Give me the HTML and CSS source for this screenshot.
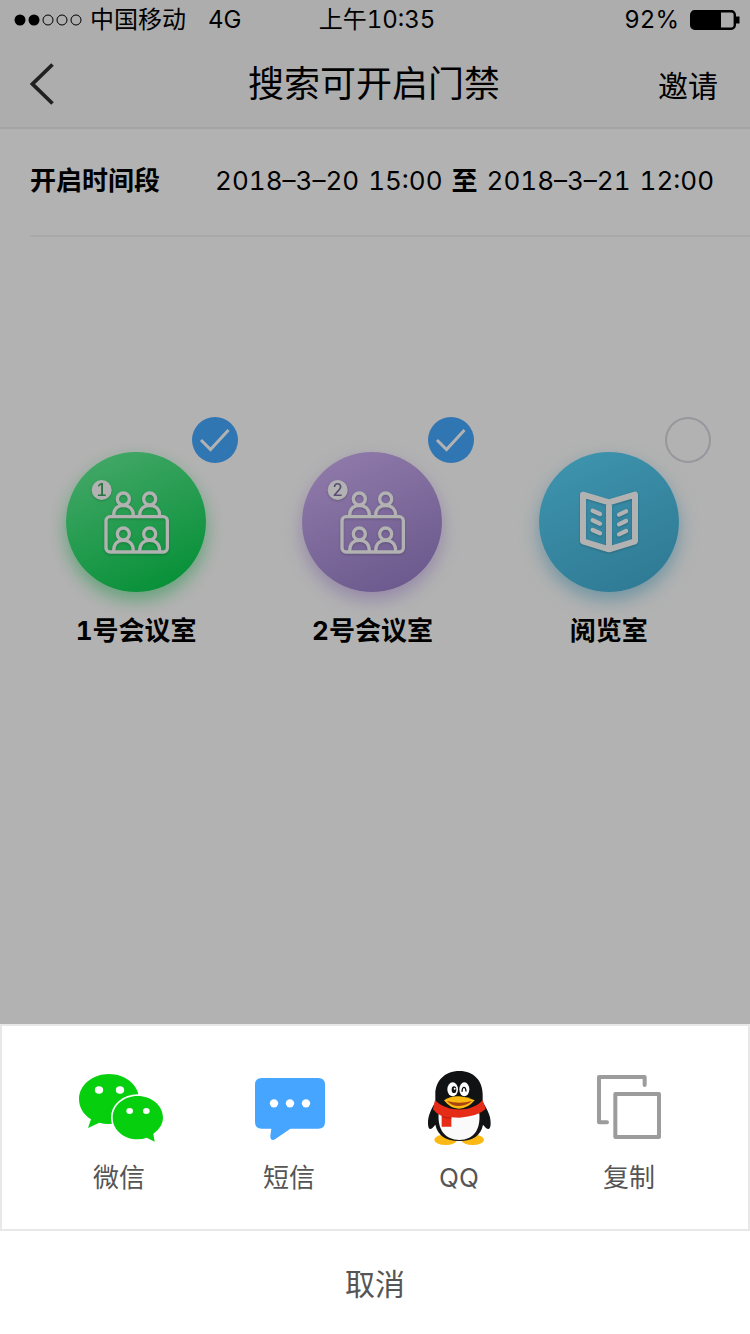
FILE: index.html
```html
<!DOCTYPE html>
<html lang="zh-CN">
<head>
<meta charset="utf-8">
<meta name="viewport" content="width=device-width, initial-scale=1">
<title>搜索可开启门禁</title>
<link rel="stylesheet" href="styles.css">
</head>
<body>
<svg class="defs" aria-hidden="true">
  <defs>
    <symbol id="meeting" viewBox="48 156 420 420">
      <g fill="none" stroke="#fff" stroke-width="10">
        <circle cx="220" cy="297" r="18"/>
        <circle cx="299" cy="297" r="18"/>
        <path d="M191 347C191 326 203 317 220 317S250 326 250 347M269 347C269 326 282 317 299 317S329 326 329 347"/>
        <rect x="168" y="350" width="184" height="106" rx="12"/>
        <circle cx="220" cy="402" r="18"/>
        <circle cx="299" cy="402" r="18"/>
        <path d="M191 453C191 431 203 421 220 421S250 431 250 453M269 453C269 431 282 421 299 421S329 431 329 453"/>
      </g>
      <circle cx="155" cy="270" r="30" fill="#fff"/>
    </symbol>
  </defs>
</svg>
<main class="screen">
  <header class="top">
    <div class="status">
      <div class="status-left">
        <svg class="signal" viewBox="0 0 68 12" aria-hidden="true">
          <circle cx="6" cy="6" r="5.5"/><circle cx="20" cy="6" r="5.5"/>
          <g fill="none" stroke="#000"><circle cx="34" cy="6" r="5"/><circle cx="48" cy="6" r="5"/><circle cx="62" cy="6" r="5"/></g>
        </svg>
        <span>中国移动</span>
        <span class="network">4G</span>
      </div>
      <time>上午10:35</time>
      <div class="status-right">
        <span>92%</span>
        <svg class="battery" viewBox="0 0 50 20" aria-hidden="true">
          <rect x="1.2" y="1.2" width="43.6" height="17.6" rx="3.5" fill="none" stroke="#000" stroke-width="2.4"/>
          <path d="M1 2h30v16H1zM45 6.5h4.5v7H45z"/>
        </svg>
      </div>
    </div>
    <nav class="nav">
      <button class="back" type="button" aria-label="返回">
        <svg viewBox="0 0 24 42" aria-hidden="true"><path d="M22.5 1.5L2.5 21l20 19.500" fill="none" stroke="#303030" stroke-width="3.8"/></svg>
      </button>
      <h1>搜索可开启门禁</h1>
      <button class="invite" type="button">邀请</button>
    </nav>
  </header>
  <section class="period">
    <h2>开启时间段</h2>
    <p><span>2018–3–20</span> <span>15:00</span> <b>至</b> <span>2018–3–21</span> <span>12:00</span></p>
  </section>
  <section class="rooms">
    <label class="room">
      <span class="disc green">
        <svg viewBox="48 156 420 420" aria-hidden="true"><use href="#meeting" x="48" y="156" width="420" height="420"/><text x="155" y="288" fill="#3ba561">1</text></svg>
        <span class="tick"><input type="checkbox" checked><svg viewBox="0 0 46 46" aria-hidden="true"><path d="M9 23l9.500 9.500L36.500 13"/></svg></span>
      </span>
      <span>1号会议室</span>
    </label>
    <label class="room">
      <span class="disc purple">
        <svg viewBox="48 156 420 420" aria-hidden="true"><use href="#meeting" x="48" y="156" width="420" height="420"/><text x="155" y="288" fill="#8470a8">2</text></svg>
        <span class="tick"><input type="checkbox" checked><svg viewBox="0 0 46 46" aria-hidden="true"><path d="M9 23l9.500 9.500L36.500 13"/></svg></span>
      </span>
      <span>2号会议室</span>
    </label>
    <label class="room">
      <span class="disc blue">
        <svg viewBox="42 156 420 420" aria-hidden="true">
          <g fill="none" stroke="#fff" stroke-linejoin="round" stroke-linecap="round">
            <path d="M174 284L252 307L330 284V424L252 448L174 424ZM252 307V448" stroke-width="18"/>
            <path d="M203 332l22 10M203 361l22 10M203 390l22 10M303 334l-21 10M303 363l-21 10M303 393l-21 10" stroke-width="13"/>
          </g>
        </svg>
        <span class="tick"><input type="checkbox"><svg viewBox="0 0 46 46" aria-hidden="true"><path d="M9 23l9.500 9.500L36.500 13"/></svg></span>
      </span>
      <span>阅览室</span>
    </label>
  </section>
</main>
<footer class="sheet">
  <div class="shares">
    <button class="share" type="button">
      <svg viewBox="45 54 264 240" aria-hidden="true">
        <g fill="#06d00e">
          <path d="M147 72C196 72 237 105 237 147S196 222 147 222Q131 222 118 218L84 234L93 208C70 194 57 172 57 147C57 105 98 72 147 72Z"/>
          <path d="M233 138C275 138 309 167 309 203Q309 231 280 251L284 275L260 263Q248 268 233 268C191 268 158 239 158 203S191 138 233 138Z" stroke="#fff" stroke-width="10" paint-order="stroke"/>
        </g>
        <g fill="#fff"><ellipse cx="117" cy="120" rx="12.500" ry="11"/><ellipse cx="180" cy="120" rx="12.500" ry="11"/><ellipse cx="209" cy="183" rx="10" ry="9"/><ellipse cx="259" cy="183" rx="10" ry="9"/></g>
      </svg>
      <span>微信</span>
    </button>
    <button class="share" type="button">
      <svg viewBox="30 54 264 240" aria-hidden="true">
        <path fill="#45a5ff" d="M80 84H250Q270 84 270 104V216Q270 236 250 236H166L120 268Q106 274 106 258L109 236H80Q60 236 60 216V104Q60 84 80 84Z"/>
        <g fill="#fff"><circle cx="117" cy="160" r="12.500"/><circle cx="165" cy="160" r="12.500"/><circle cx="213" cy="160" r="12.500"/></g>
      </svg>
      <span>短信</span>
    </button>
    <button class="share" type="button">
      <svg viewBox="15 24 264 240" aria-hidden="true">
        <g fill="#fcb813"><ellipse cx="107" cy="239" rx="34" ry="16"/><ellipse cx="188" cy="239" rx="34" ry="16"/></g>
        <path fill="#101214" d="M148 33C104 33 76 63 76 103V126C66 144 53 166 54 191C55 213 63 211 76 194C83 226 107 243 148 243S213 226 219 194C232 211 241 213 242 191C243 166 229 144 218 126V103C218 63 192 33 148 33Z"/>
        <path fill="#fafafa" d="M86 160H208C212 209 191 240 148 240S82 209 86 160Z"/>
        <path fill="#e62c17" d="M75 120C110 158 187 158 218 120L227 147Q204 169 148 173L124 172V200H95V168Q78 161 69 148Z"/>
        <path fill="#b91d10" d="M96 168Q110 173 124 172V176Q109 176 96 171Z"/>
        <ellipse cx="128" cy="88" rx="16" ry="21" fill="#fff"/><ellipse cx="163" cy="88" rx="15" ry="21" fill="#fff"/>
        <ellipse cx="132" cy="89" rx="7" ry="10" fill="#111"/><circle cx="134" cy="86" r="3" fill="#fff"/>
        <path d="M156 94Q157 82 162 82T168 93" fill="none" stroke="#111" stroke-width="4" stroke-linecap="round"/>
        <path fill="#fcb813" d="M102 121Q123 107 148 109T194 121Q174 145 148 146T102 121Z"/>
        <path fill="#a94310" d="M111 123Q148 134 186 123Q170 137 148 138T111 123Z"/>
      </svg>
      <span>QQ</span>
    </button>
    <button class="share" type="button">
      <svg viewBox="18 174 264 240" aria-hidden="true">
        <g fill="none" stroke="#9c9c9c" stroke-width="12" stroke-linejoin="round" stroke-linecap="round"><path d="M197 225V201H60V337H84"/><path d="M109 252H240V381H109Z"/></g>
      </svg>
      <span>复制</span>
    </button>
  </div>
  <button class="cancel" type="button">取消</button>
</footer>
</body>
</html>
```
FILE: styles.css
```css
* {
  box-sizing: border-box;
}

body {
  margin: 0;
  min-height: 100vh;
  display: flex;
  flex-direction: column;
  font-family: Inter, "Noto Sans CJK SC", sans-serif;
  font-variant-numeric: tabular-nums;
  color: #000;
  background: #fff;
}

h1, h2, p {
  margin: 0;
  font-weight: 400;
}

button {
  padding: 0;
  border: 0;
  background: none;
  color: inherit;
  font: inherit;
}

svg {
  display: block;
}

.defs {
  position: absolute;
  width: 0;
  height: 0;
}

.screen {
  position: relative;
  flex: 1;
}

/* dimming layer behind the share sheet */
.screen::after {
  content: "";
  position: absolute;
  inset: 0;
  background: rgba(0, 0, 0, 0.3);
}

.top {
  background: #f8f8f8;
  border-bottom: 2px solid #ebebeb;
}

.status {
  height: 40px;
  padding: 0 10px 0 14px;
  display: grid;
  grid-template-columns: 1fr auto 1fr;
  align-items: center;
  font-size: 24px;
  line-height: 38px;
}

.status-left,
.status-right {
  display: flex;
  align-items: center;
}

.status-right {
  justify-content: flex-end;
  gap: 11px;
}

.signal {
  width: 68px;
  height: 12px;
  margin-right: 8px;
}

.network {
  margin-left: 22px;
}

.battery {
  width: 50px;
  height: 20px;
}

.nav {
  height: 87px;
  padding: 0 32px 0 30px;
  display: grid;
  grid-template-columns: 1fr auto 1fr;
  align-items: center;
}

.nav h1 {
  font-size: 36px;
  line-height: 48px;
}

.back {
  justify-self: start;
}

.back svg {
  width: 24px;
  height: 42px;
}

.invite {
  justify-self: end;
  font-size: 30px;
}

.period {
  height: 108px;
  margin-left: 30px;
  padding: 0 36px 2px 0;
  display: flex;
  align-items: center;
  justify-content: space-between;
  border-bottom: 2px solid #f3f3f3;
  font-size: 26px;
  line-height: 36px;
}

.period h2 {
  font-size: 26px;
  font-weight: 700;
}

.period p {
  display: flex;
  gap: 9px;
}

.rooms {
  padding: 215px 23px 0 18px;
  display: grid;
  grid-template-columns: repeat(3, 1fr);
}

.room {
  display: flex;
  flex-direction: column;
  align-items: center;
  gap: 21px;
  font-size: 26px;
  font-weight: 700;
  line-height: 36px;
}

.disc {
  position: relative;
  width: 140px;
  height: 140px;
  border-radius: 50%;
}

.disc > svg {
  width: 140px;
  height: 140px;
  filter: drop-shadow(0 1px 1px rgba(0, 0, 0, 0.2));
}

.disc text {
  font-size: 50px;
  font-weight: 500;
  text-anchor: middle;
}

.green {
  background: linear-gradient(155deg, #5fef93 8%, #00cb48 100%);
  background: linear-gradient(155deg, #60f094 8%, #00cb48 100%);
  box-shadow: 0 8px 18px rgba(0, 203, 72, 0.45);
}

.purple {
  background: linear-gradient(155deg, #cdaff3 8%, #957bc6 100%);
  box-shadow: 0 8px 18px rgba(149, 105, 220, 0.4);
}

.blue {
  background: linear-gradient(155deg, #59d3f8 8%, #42acd2 100%);
  box-shadow: 0 8px 18px rgba(66, 172, 210, 0.5);
}

/* selection mark over the top right of a room */
.tick {
  position: absolute;
  top: -35px;
  right: -32px;
  display: grid;
}

.tick input,
.tick svg {
  grid-area: 1 / 1;
  width: 46px;
  height: 46px;
  margin: 0;
}

.tick input {
  appearance: none;
  border: 2px solid #d8d8e0;
  border-radius: 50%;
}

.tick input:checked {
  border: 0;
  background: #45a9ff;
}

.tick path {
  fill: none;
  stroke: #fff;
  stroke-width: 3;
}

.tick input:not(:checked) + svg {
  visibility: hidden;
}

.sheet {
  display: flex;
  flex-direction: column;
  background: #fff;
  color: #555;
}

.shares {
  padding: 42px 34px 36px 32px;
  display: grid;
  grid-template-columns: repeat(4, 1fr);
  border: 2px solid #e8e8e8;
}

.share {
  display: flex;
  flex-direction: column;
  align-items: center;
  gap: 15px;
  font-size: 26px;
  line-height: 30px;
}

.share svg {
  width: 88px;
  height: 80px;
}

.cancel {
  height: 103px;
  padding-bottom: 2px;
  font-size: 30px;
}
```
